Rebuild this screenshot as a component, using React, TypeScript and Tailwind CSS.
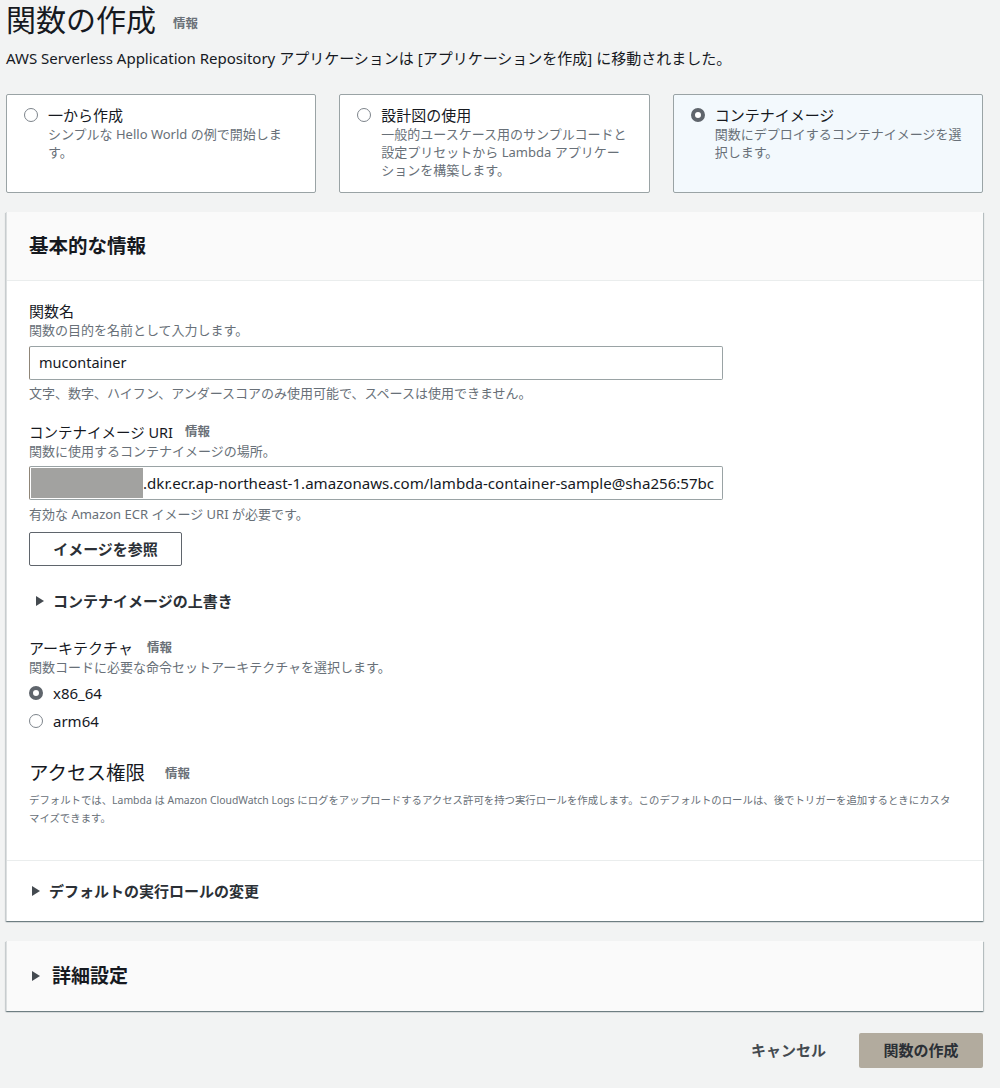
import React from "react";

const font = { fontFamily: '"Noto Sans", "Noto Sans CJK JP", sans-serif' };

function Info({ className = "" }: { className?: string }) {
  return <span className={`text-[12.5px] font-bold text-[#6b7178] ${className}`}>情報</span>;
}

function Radio({ checked }: { checked?: boolean }) {
  return checked ? (
    <span className="inline-block w-[14px] h-[14px] rounded-full border-[4px] border-[#5f656c] bg-white shrink-0" />
  ) : (
    <span className="inline-block w-[14px] h-[14px] rounded-full border-[1.5px] border-[#7d848b] bg-white shrink-0" />
  );
}

function Caret({ size = 8 }: { size?: number }) {
  return (
    <svg width={size} height={size + 2} viewBox="0 0 8 10" className="shrink-0">
      <path d="M0 0 L8 5 L0 10 Z" fill="#444a50" />
    </svg>
  );
}

function Card({
  title,
  lines,
  checked,
}: {
  title: string;
  lines: string[];
  checked?: boolean;
}) {
  return (
    <div
      className={`h-[99px] border border-[#9aa3a5] rounded-[2px] pl-[17px] pr-3 pt-[10px] ${
        checked ? "bg-[#f3f9fd]" : "bg-white"
      }`}
    >
      <div className="flex items-center gap-[10px] h-[20px]">
        <Radio checked={checked} />
        <span className="text-[15px] text-[#16191f] leading-[20px]">{title}</span>
      </div>
      <div className="pl-[24px] text-[13px] leading-[18px] text-[#687078]">
        {lines.map((l, i) => (
          <div key={i} className="whitespace-nowrap">
            {l}
          </div>
        ))}
      </div>
    </div>
  );
}

const panelShadow =
  "shadow-[0_1px_1px_0_rgba(0,28,36,0.35),1px_1px_1px_0_rgba(0,28,36,0.2),-1px_1px_1px_0_rgba(0,28,36,0.12)]";

export default function App() {
  return (
    <div style={font} className="bg-[#f2f3f3] w-[1000px] h-[1088px] pl-[6px] pr-[17px] text-[#16191f]">
      <div className="flex h-[40px] items-center">
        <h1 className="text-[30px] leading-[40px] font-normal text-[#16191f]">関数の作成</h1>
        <Info className="ml-[17px] mt-[8px]" />
      </div>
      <p className="mt-[8px] text-[15px] leading-[20px] text-[#16191f] whitespace-nowrap">
        AWS Serverless Application Repository アプリケーションは [アプリケーションを作成] に移動されました。
      </p>

      <div className="grid grid-cols-3 gap-[23px] mt-[26px]">
        <Card title="一から作成" lines={["シンプルな Hello World の例で開始しま", "す。"]} />
        <Card
          title="設計図の使用"
          lines={["一般的ユースケース用のサンプルコードと", "設定プリセットから Lambda アプリケー", "ションを構築します。"]}
        />
        <Card checked title="コンテナイメージ" lines={["関数にデプロイするコンテナイメージを選", "択します。"]} />
      </div>

      <div className={`mt-[19px] bg-white border-l border-[#dcdfe0] ${panelShadow}`}>
        <div className="bg-[#fafafa] border-b border-[#eaeded] h-[69px] flex items-center px-[22px]">
          <h2 className="text-[19.5px] font-bold leading-[24px] text-[#16191f]">基本的な情報</h2>
        </div>

        <div className="px-[22px] pt-[20px] pb-[33px] border-b border-[#eaeded]">
          <div className="text-[15px] leading-[20px]">関数名</div>
          <div className="text-[13px] leading-[18px] text-[#687078]">関数の目的を名前として入力します。</div>
          <div className="mt-[7px] w-[694px] h-[34px] border border-[#9aa3a5] border-l-[#8f8577] rounded-[2px] flex items-center pl-[9px] text-[14.5px]">
            mucontainer
          </div>
          <div className="mt-[4px] text-[13px] leading-[18px] text-[#687078]">
            文字、数字、ハイフン、アンダースコアのみ使用可能で、スペースは使用できません。
          </div>

          <div className="mt-[20px] flex items-center gap-[12px] text-[14.5px] leading-[20px]">
            <span>コンテナイメージ URI</span>
            <Info />
          </div>
          <div className="text-[13px] leading-[18px] text-[#687078]">関数に使用するコンテナイメージの場所。</div>
          <div className="mt-[6px] w-[694px] h-[34px] border border-[#9aa3a5] border-l-[#8f8577] rounded-[2px] flex items-center pl-[1px] text-[15.1px] overflow-hidden whitespace-nowrap">
            <span className="inline-block w-[112px] h-[30px] bg-[#a2a2a0] shrink-0" />
            <span>.dkr.ecr.ap-northeast-1.amazonaws.com/lambda-container-sample@sha256:57bc</span>
          </div>
          <div className="mt-[5px] text-[13px] leading-[18px] text-[#687078]">有効な Amazon ECR イメージ URI が必要です。</div>
          <button className="mt-[9px] w-[153px] h-[34px] border border-[#5f656c] rounded-[2px] bg-white text-[15px] font-bold text-[#2b3036]">
            イメージを参照
          </button>

          <div className="mt-[25px] h-[20px] flex items-center gap-[9px] pl-[7px]">
            <Caret />
            <span className="text-[15px] font-bold text-[#2b3036]">コンテナイメージの上書き</span>
          </div>

          <div className="mt-[27px] flex items-center gap-[14px] text-[15px] leading-[20px]">
            <span>アーキテクチャ</span>
            <Info />
          </div>
          <div className="text-[13px] leading-[18px] text-[#687078]">関数コードに必要な命令セットアーキテクチャを選択します。</div>
          <div className="mt-[7px] h-[20px] flex items-center gap-[10px]">
            <Radio checked />
            <span className="text-[15px]">x86_64</span>
          </div>
          <div className="mt-[8px] h-[20px] flex items-center gap-[10px]">
            <Radio />
            <span className="text-[15px]">arm64</span>
          </div>

          <div className="mt-[28px] h-[28px] flex items-center gap-[20px]">
            <span className="text-[19.5px] leading-[28px]">アクセス権限</span>
            <Info className="mt-[2px]" />
          </div>
          <div className="mt-[4px] text-[10.4px] leading-[18px] text-[#687078] whitespace-nowrap">
            <div>
              デフォルトでは、Lambda は Amazon CloudWatch Logs にログをアップロードするアクセス許可を持つ実行ロールを作成します。このデフォルトのロールは、後でトリガーを追加するときにカスタ
            </div>
            <div>マイズできます。</div>
          </div>
        </div>

        <div className="h-[60px] flex items-center gap-[9px] pl-[25px]">
          <Caret />
          <span className="text-[15px] font-bold text-[#2b3036]">デフォルトの実行ロールの変更</span>
        </div>
      </div>

      <div className={`mt-[20px] h-[70px] bg-[#fafafa] border-l border-[#dcdfe0] flex items-center gap-[12px] pl-[25px] ${panelShadow}`}>
        <Caret size={8} />
        <span className="text-[19px] font-bold text-[#16191f]">詳細設定</span>
      </div>

      <div className="mt-[22px] flex justify-end items-center gap-[33px]">
        <span className="text-[15px] font-bold text-[#444a50]">キャンセル</span>
        <button className="w-[124px] h-[35px] rounded-[2px] bg-[#b2ab9e] text-[15px] font-bold text-[#2b3036]">
          関数の作成
        </button>
      </div>
    </div>
  );
}
